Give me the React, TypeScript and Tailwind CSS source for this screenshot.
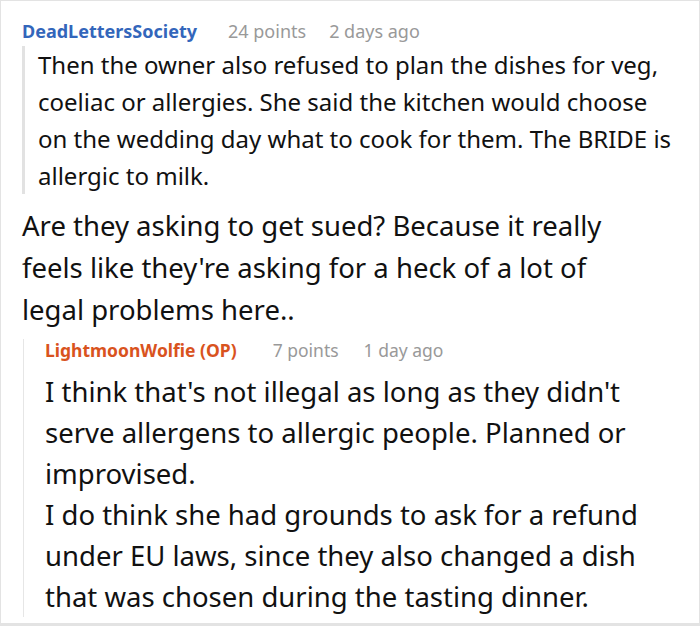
import React from 'react';

const App = () => {
    return (
        <div className="w-[700px] h-[626px] bg-white border border-[#e3e3e3] border-b-[3px] overflow-hidden font-['Noto_Sans',sans-serif] text-[#111]">
            <div className="pl-[21px] pt-[17px]">
                <div className="flex items-baseline text-[18px] leading-[26px]">
                    <span className="font-bold text-[#3366bb]">DeadLettersSociety</span>
                    <span className="ml-[31px] text-[#999]">24 points</span>
                    <span className="ml-[23px] text-[#999]">2 days ago</span>
                </div>
                <div className="mt-[2px] border-l-[3px] border-[#e2e2e2] pl-[13px] text-[24px] leading-[37px] w-[660px]">
                    Then the owner also refused to plan the dishes for veg, coeliac or allergies. She said the kitchen would choose on the wedding day what to cook for them. The BRIDE is allergic to milk.
                </div>
                <div className="mt-[11px] text-[27.5px] leading-[42px] w-[600px]">
                    Are they asking to get sued? Because it really feels like they're asking for a heck of a lot of legal problems here..
                </div>
                <div className="mt-[8px] ml-[1px] border-l border-[#e6e6e6] pl-[21px]">
                    <div className="flex items-baseline text-[17.5px] leading-[22px]">
                        <span className="font-bold text-[#d9531e]">LightmoonWolfie (OP)</span>
                        <span className="ml-[36px] text-[#999]">7 points</span>
                        <span className="ml-[25px] text-[#999]">1 day ago</span>
                    </div>
                    <div className="mt-[10px] text-[27.5px] leading-[41px] w-[630px]">
                        <p>I think that's not illegal as long as they didn't serve allergens to allergic people. Planned or improvised.</p>
                        <p>I do think she had grounds to ask for a refund under EU laws, since they also changed a dish that was chosen during the tasting dinner.</p>
                    </div>
                </div>
            </div>
        </div>
    );
};

export default App;
